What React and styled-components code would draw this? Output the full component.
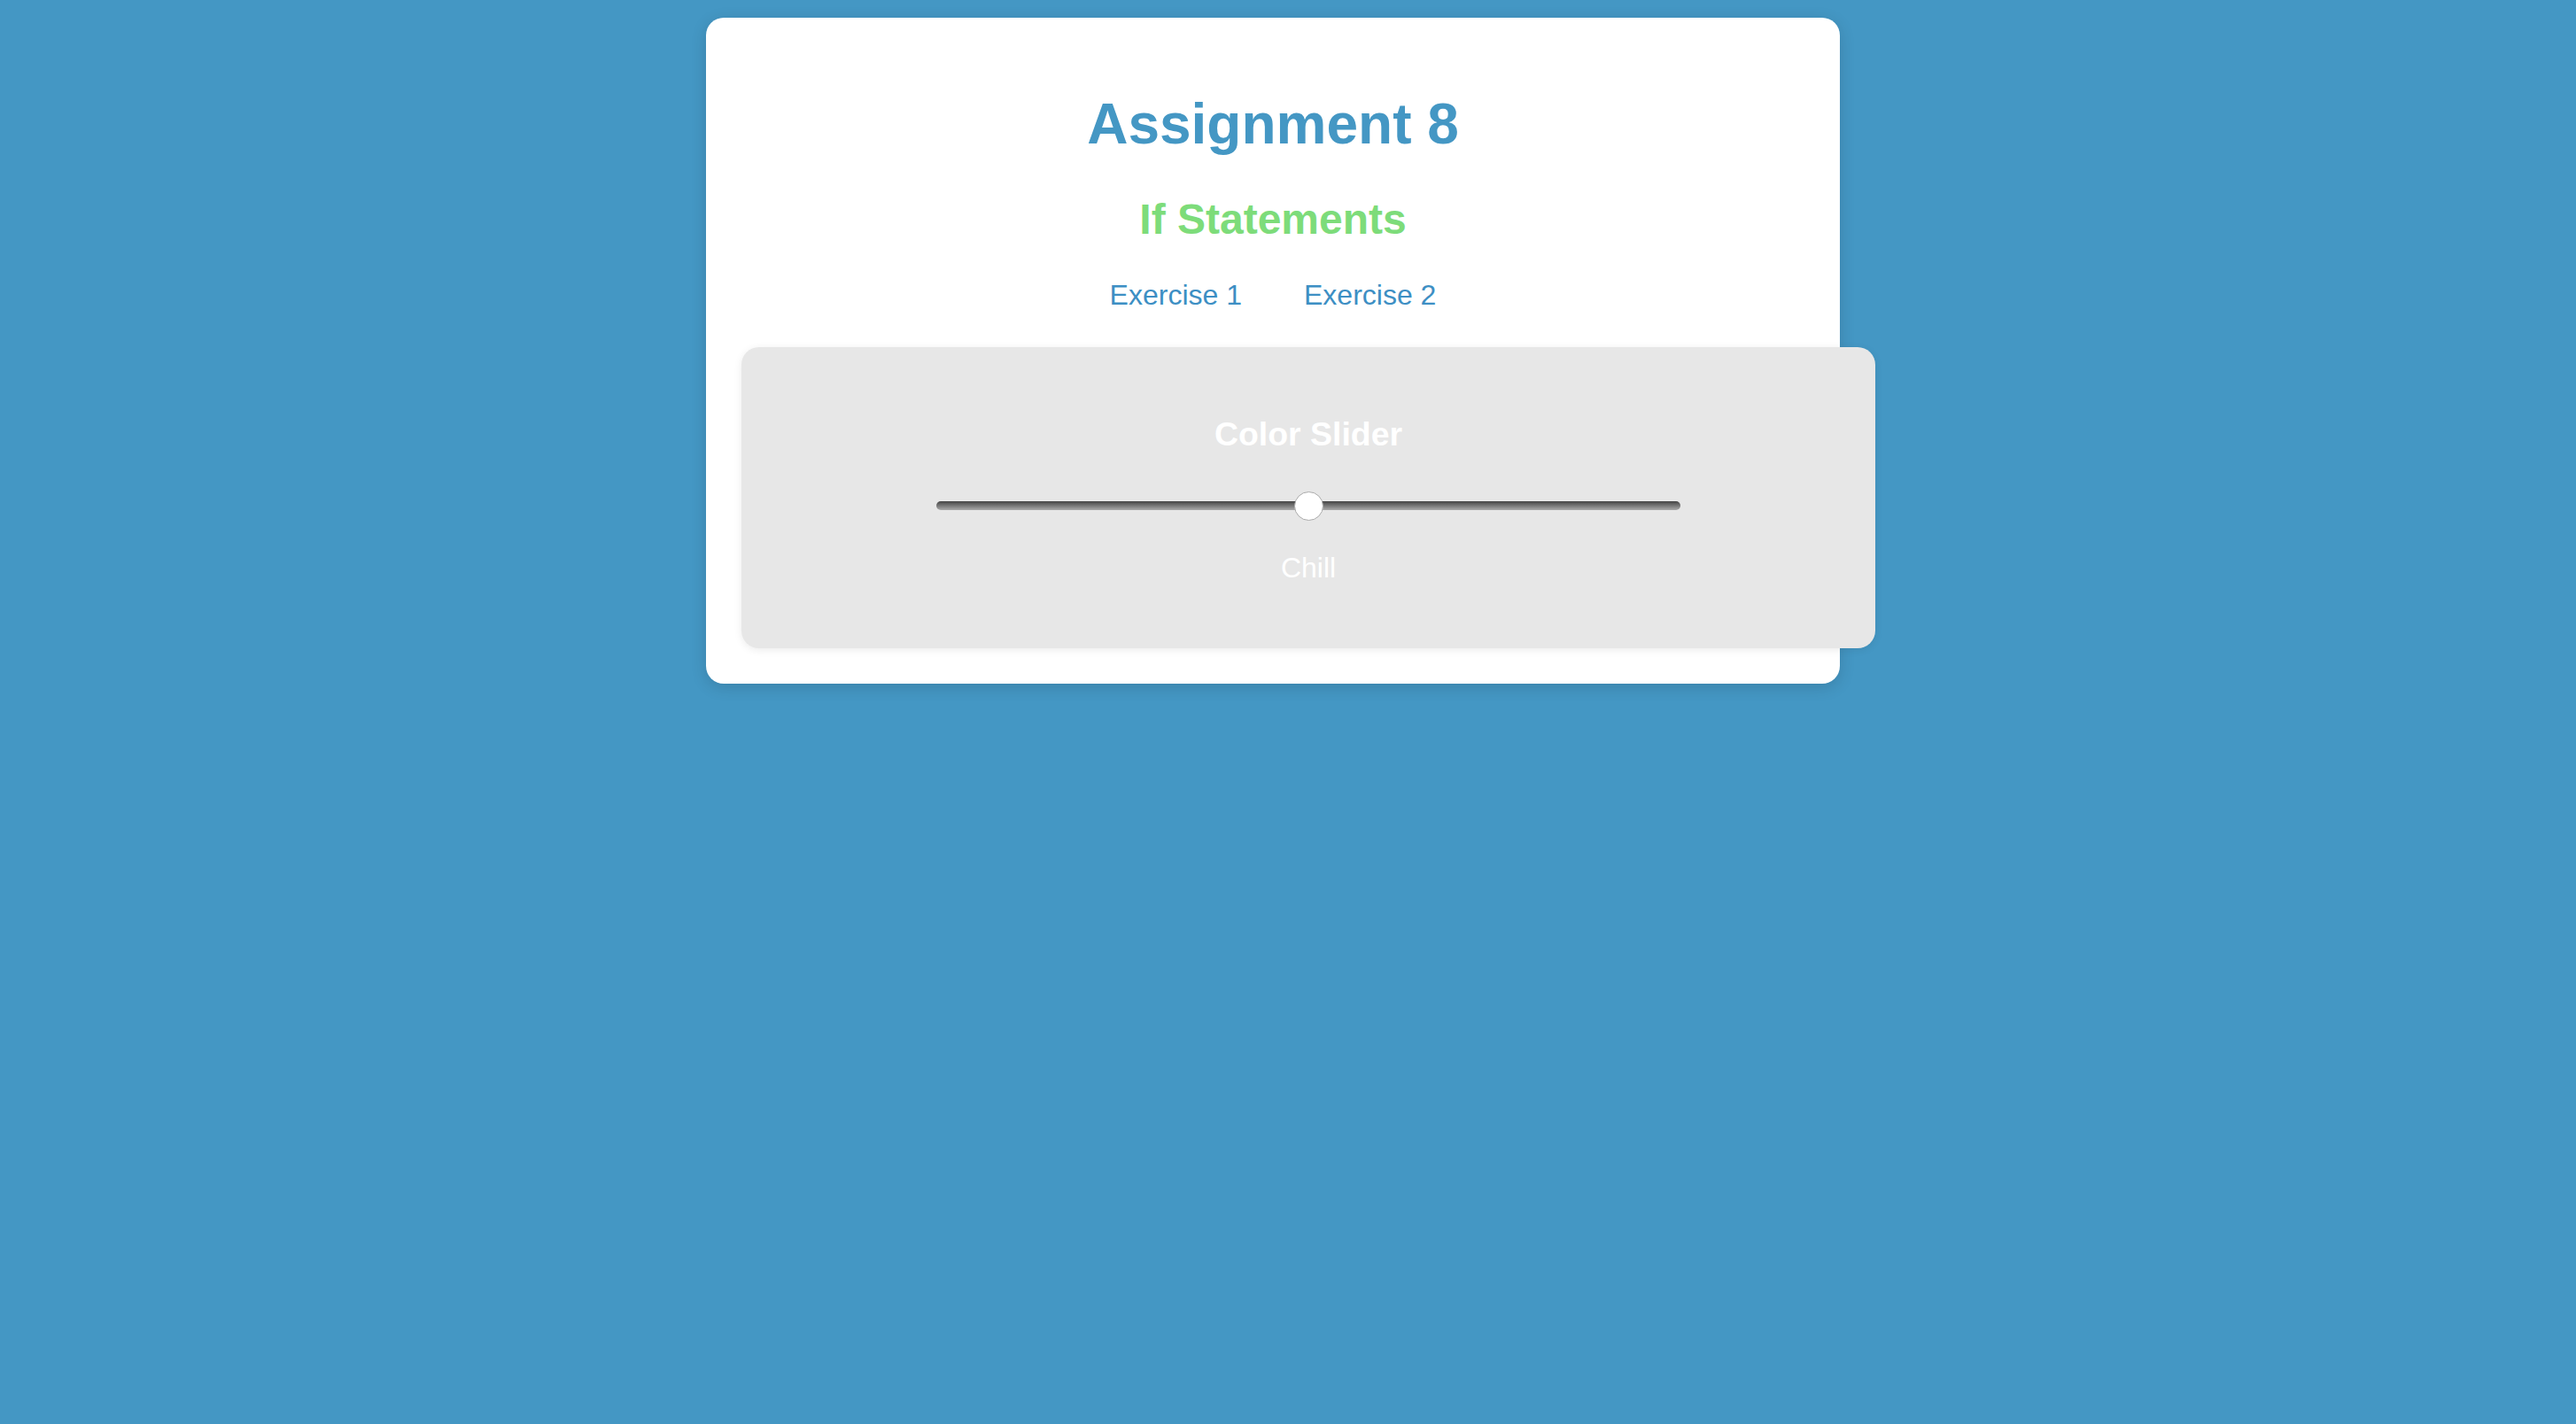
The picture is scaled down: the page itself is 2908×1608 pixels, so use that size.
import React, { useState } from 'react';
import styled, { createGlobalStyle } from 'styled-components';

const GlobalStyle = createGlobalStyle`
  html, body {
    margin: 0;
    padding: 0;
    background-color: #4497c4;
    font-family: "Liberation Sans", Arial, Helvetica, sans-serif;
    font-size: 32px;
  }
`;

const Page = styled.div`
  display: flex;
  justify-content: center;
  align-items: flex-start;
  min-height: 1608px;
  padding: 20px 34px 0 0;
  box-sizing: border-box;
`;

const Card = styled.div`
  width: 1200px;
  padding: 40px;
  background-color: #fff;
  border-radius: 20px;
  box-shadow: 0 4px 18px rgba(0, 0, 0, 0.14);
  text-align: center;
`;

const Title = styled.h1`
  font-size: 64px;
  font-weight: bold;
  color: #4497c4;
  margin: 43px 0;
`;

const SubTitle = styled.h2`
  font-size: 48px;
  font-weight: bold;
  color: #7ddc7a;
  margin: 0 0 40px;
`;

const Nav = styled.nav`
  display: flex;
  justify-content: center;
  gap: 70px;
  margin-bottom: 40px;
`;

const NavLink = styled.a`
  color: #3d8fc4;
  font-size: 32px;
  text-decoration: none;
  cursor: pointer;
`;

const Panel = styled.div`
  width: 100%;
  padding: 40px;
  background-color: #e7e7e7;
  border-radius: 20px;
  box-shadow: 0 2px 10px rgba(0, 0, 0, 0.08);
`;

const PanelTitle = styled.h3`
  font-size: 37.44px;
  font-weight: bold;
  color: #fff;
  margin: 37px 0;
`;

// margin-top collapses with the heading's bottom margin
const Slider = styled.input`
  -webkit-appearance: none;
  appearance: none;
  display: block;
  width: 840px;
  height: 10px;
  margin: 54px auto 0;
  border-radius: 5px;
  background: linear-gradient(to bottom, #444 0%, #777 50%, #aaa 100%);
  outline: none;

  &::-webkit-slider-thumb {
    -webkit-appearance: none;
    appearance: none;
    width: 33px;
    height: 33px;
    border-radius: 50%;
    background: #fff;
    border: 1px solid #aaa;
    box-sizing: border-box;
    cursor: pointer;
  }
`;

const Mood = styled.p`
  font-size: 32px;
  color: #fff;
  margin: 47px 0 32px;
`;

const moodFor = (v) => {
  if (v < 33) return 'Calm';
  if (v < 67) return 'Chill';
  return 'Hyped';
};

const App = () => {
  const [value, setValue] = useState(50);

  return (
    <>
      <GlobalStyle />
      <Page>
        <Card>
          <Title>Assignment 8</Title>
          <SubTitle>If Statements</SubTitle>
          <Nav>
            <NavLink>Exercise 1</NavLink>
            <NavLink>Exercise 2</NavLink>
          </Nav>
          <Panel>
            <PanelTitle>Color Slider</PanelTitle>
            <Slider
              type="range"
              min="0"
              max="100"
              value={value}
              onChange={(e) => setValue(Number(e.target.value))}
            />
            <Mood>{moodFor(value)}</Mood>
          </Panel>
        </Card>
      </Page>
    </>
  );
};

export default App;
